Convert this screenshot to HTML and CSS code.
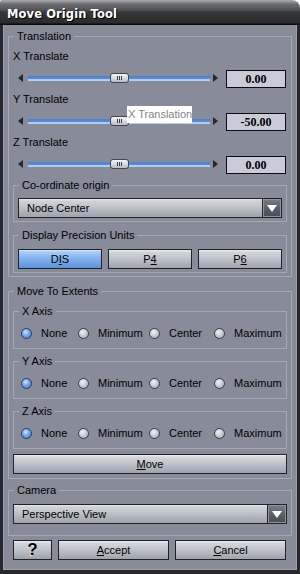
FILE: index.html
```html
<!DOCTYPE html>
<html>
<head>
<meta charset="utf-8">
<title>Move Origin Tool</title>
<link rel="stylesheet" href="styles.css">
</head>
<body>
<div class="window">
  <div class="titlebar"><span class="title">Move Origin Tool</span></div>
  <div class="panel">
    <fieldset class="group g-translation">
      <legend>Translation</legend>
      <div class="group-body">
        <div class="field-label">X Translate</div>
        <div class="slider-row">
          <span class="arrow-left"></span>
          <div class="track"><span class="rail"></span><span class="thumb"><span class="grip"></span></span><span class="rail"></span></div>
          <span class="arrow-right"></span>
          <div class="value">0.00</div>
        </div>
        <div class="field-label">Y Translate</div>
        <div class="slider-row">
          <span class="arrow-left"></span>
          <div class="track"><span class="rail"></span><span class="thumb"><span class="grip"></span></span><span class="rail"></span></div>
          <span class="arrow-right"></span>
          <div class="value">-50.00</div>
        </div>
        <div class="field-label">Z Translate</div>
        <div class="slider-row">
          <span class="arrow-left"></span>
          <div class="track"><span class="rail"></span><span class="thumb"><span class="grip"></span></span><span class="rail"></span></div>
          <span class="arrow-right"></span>
          <div class="value">0.00</div>
        </div>

        <fieldset class="group g-origin">
          <legend>Co-ordinate origin</legend>
          <div class="group-body">
            <div class="combo"><span class="combo-text">Node Center</span><span class="combo-btn"><span class="tri"></span></span></div>
          </div>
        </fieldset>

        <fieldset class="group g-precision">
          <legend>Display Precision Units</legend>
          <div class="group-body precision">
            <div class="btn pressed">D<u>I</u>S</div>
            <div class="btn">P<u>4</u></div>
            <div class="btn">P<u>6</u></div>
          </div>
        </fieldset>
      </div>
    </fieldset>

    <fieldset class="group g-extents">
      <legend>Move To Extents</legend>
      <div class="group-body">
        <fieldset class="group g-axis">
          <legend>X Axis</legend>
          <div class="group-body radio-row">
            <span class="radio"><span class="dot on"></span>None</span>
            <span class="radio"><span class="dot"></span>Minimum</span>
            <span class="radio"><span class="dot"></span>Center</span>
            <span class="radio"><span class="dot"></span>Maximum</span>
          </div>
        </fieldset>
        <fieldset class="group g-axis">
          <legend>Y Axis</legend>
          <div class="group-body radio-row">
            <span class="radio"><span class="dot on"></span>None</span>
            <span class="radio"><span class="dot"></span>Minimum</span>
            <span class="radio"><span class="dot"></span>Center</span>
            <span class="radio"><span class="dot"></span>Maximum</span>
          </div>
        </fieldset>
        <fieldset class="group g-axis">
          <legend>Z Axis</legend>
          <div class="group-body radio-row">
            <span class="radio"><span class="dot on"></span>None</span>
            <span class="radio"><span class="dot"></span>Minimum</span>
            <span class="radio"><span class="dot"></span>Center</span>
            <span class="radio"><span class="dot"></span>Maximum</span>
          </div>
        </fieldset>
        <div class="btn move-btn"><u>M</u>ove</div>
      </div>
    </fieldset>

    <fieldset class="group g-camera">
      <legend>Camera</legend>
      <div class="group-body">
        <div class="combo"><span class="combo-text">Perspective View</span><span class="combo-btn"><span class="tri"></span></span></div>
      </div>
    </fieldset>

    <div class="actions">
      <div class="btn help">?</div>
      <div class="btn"><u>A</u>ccept</div>
      <div class="btn"><u>C</u>ancel</div>
    </div>
  </div>
  <div class="tooltip">X Translation</div>
</div>
</body>
</html>
```

FILE: styles.css
```css
* { box-sizing: border-box; }
html, body { margin: 0; padding: 0; }
body {
  background: #ffffff;
  font-family: "Liberation Sans", Arial, sans-serif;
  font-size: 11px;
  line-height: 13px;
  color: #000;
}
.window {
  position: relative;
  width: 300px;
  height: 574px;
  display: flex;
  flex-direction: column;
  overflow: hidden;
}
.titlebar {
  flex: none;
  height: 25px;
  padding: 3px 0 0 7px;
  border-top-right-radius: 8px;
  border-top-left-radius: 2px;
  background: linear-gradient(to bottom, #a4a6aa 0, #8e9094 2px, #6c6e72 4px, #505256 10px, #36373a 12px, #2a2b2d 23px, #0a0a0a 24px);
}
.title {
  font-family: "DejaVu Sans", Verdana, sans-serif;
  font-weight: bold;
  font-size: 11.5px;
  line-height: 22px;
  color: #fff;
  text-shadow: 1px 1px 0 #000;
  letter-spacing: 0.1px;
}
.panel {
  flex: 1;
  background: #878c98;
  border-left: 3px solid #26282d;
  border-right: 3px solid #26282d;
  border-bottom: 4px solid #26282d;
  box-shadow: inset 1px 0 #9a9ea8, inset -1px 0 #9a9ea8, inset 0 -1px #9a9ea8;
  padding-top: 5px;
}
fieldset.group {
  margin: 0;
  padding: 0;
  min-width: 0;
  border: 1px solid #a3a8b3;
}
fieldset.group > legend {
  margin-left: 5px;
  padding: 0 3px;
  font-size: 11px;
  line-height: 13px;
}
.g-translation { margin: 0 5px !important; }
.g-translation > .group-body { padding: 7px 4px 3px; }
.field-label { height: 13px; }
.slider-row {
  display: flex;
  align-items: center;
  height: 18px;
  margin: 7px 1px 5px 0;
  padding-left: 5px;
}
.arrow-left {
  width: 0; height: 0;
  border-top: 4px solid transparent;
  border-bottom: 4px solid transparent;
  border-right: 5px solid #25272c;
  margin: 0 5px 2px 0;
}
.arrow-right {
  width: 0; height: 0;
  border-top: 4px solid transparent;
  border-bottom: 4px solid transparent;
  border-left: 5px solid #25272c;
  margin: 0 8px 2px 3px;
}
.track {
  flex: 1;
  display: flex;
  align-items: center;
  height: 10px;
  margin-bottom: 2px;
}
.rail {
  flex: 1;
  height: 5px;
  background: linear-gradient(to bottom, #4c7fcc 0, #5a8fdc 3px, #a9c7f2 3px, #b9d2f5 5px);
}
.thumb {
  flex: none;
  width: 19px;
  height: 10px;
  border: 1px solid #44474e;
  border-radius: 3px;
  background: linear-gradient(to bottom, #f4f4f6 0, #dcdee2 45%, #b9bcc4 100%);
  display: flex;
  align-items: center;
  justify-content: center;
}
.grip {
  width: 5px;
  height: 4px;
  background: linear-gradient(to right, #3c3f46 0 1px, transparent 1px 2px, #3c3f46 2px 3px, transparent 3px 4px, #3c3f46 4px 5px);
}
.value {
  width: 60px;
  height: 18px;
  border: 1px solid #0c0c0e;
  background: #c9ccd7;
  font-family: "Liberation Serif", "Times New Roman", serif;
  font-weight: bold;
  font-size: 12px;
  line-height: 16px;
  text-align: center;
}
.g-origin { margin-top: 1px !important; }
.g-origin > .group-body { padding: 6px 4px 3px; }
.combo {
  display: flex;
  height: 20px;
  border: 1px solid #202227;
  background: linear-gradient(to bottom, #e4e6ea 0, #cfd2d8 2px, #bfc2c9 45%, #a9adb6 80%, #9fa3ac 100%);
}
.combo-text {
  flex: 1;
  padding-left: 8px;
  line-height: 18px;
}
.combo-btn {
  flex: none;
  width: 19px;
  border-left: 1px solid #202227;
  background: linear-gradient(to bottom, #7a7e88 0, #5c606a 50%, #484c55 100%);
  box-shadow: inset 0 0 0 1px #9094a0;
  display: flex;
  align-items: center;
  justify-content: center;
}
.tri {
  width: 0; height: 0;
  border-left: 5px solid transparent;
  border-right: 5px solid transparent;
  border-top: 7px solid #fff;
}
.g-precision { margin-top: 7px !important; }
.precision {
  display: grid;
  grid-template-columns: 1fr 1fr 1fr;
  column-gap: 6px;
  padding: 7px 4px 3px;
}
.btn {
  height: 20px;
  border: 1px solid #202227;
  background: linear-gradient(to bottom, #eceef1 0, #d3d6dc 2px, #c4c7ce 40%, #abafb8 80%, #9ea2ab 100%);
  display: flex;
  align-items: center;
  justify-content: center;
  line-height: 13px;
}
.btn.pressed {
  background: linear-gradient(to bottom, #d2e5fc 0, #a8ccf6 2px, #84b2ec 45%, #6b9ee2 80%, #5c92db 100%);
}
.btn u { text-underline-offset: 1px; }
.g-extents { margin: 8px 5px 0 !important; }
.g-extents > .group-body { padding: 7px 4px 4px; }
.g-axis + .g-axis { margin-top: 6px !important; }
.radio-row {
  display: grid;
  grid-template-columns: 57px 71px 65px 1fr;
  height: 30px;
  padding: 9px 0 8px 7px;
}
.radio {
  display: flex;
  align-items: center;
  gap: 9px;
  height: 13px;
}
.dot {
  flex: none;
  width: 11px;
  height: 11px;
  border-radius: 50%;
  border: 1px solid #3a3d44;
  background: radial-gradient(circle at 40% 35%, #f2f3f5 0, #d4d6da 35%, #9a9ea6 100%);
}
.dot.on {
  border-color: #2a3a5c;
  background: radial-gradient(circle at 40% 35%, #d8e8ff 0, #7fb0f0 35%, #3d72c8 100%);
}
.move-btn { margin-top: 5px; }
.g-camera { margin: 5px 5px 0 !important; }
.g-camera > .group-body { padding: 7px 4px 11px; }
.actions {
  display: grid;
  grid-template-columns: 39px 1fr 1fr;
  column-gap: 6px;
  margin: 4px 11px 0 10px;
}
.help {
  font-weight: bold;
  font-size: 17px;
  line-height: 18px;
  text-shadow: -1px 1px 0 #e4e6ea;
}
.tooltip {
  position: absolute;
  left: 127px;
  top: 106px;
  width: 65px;
  height: 17px;
  background: #fff;
  color: #858585;
  line-height: 17px;
  padding-left: 1px;
  white-space: nowrap;
  overflow: hidden;
}
```
